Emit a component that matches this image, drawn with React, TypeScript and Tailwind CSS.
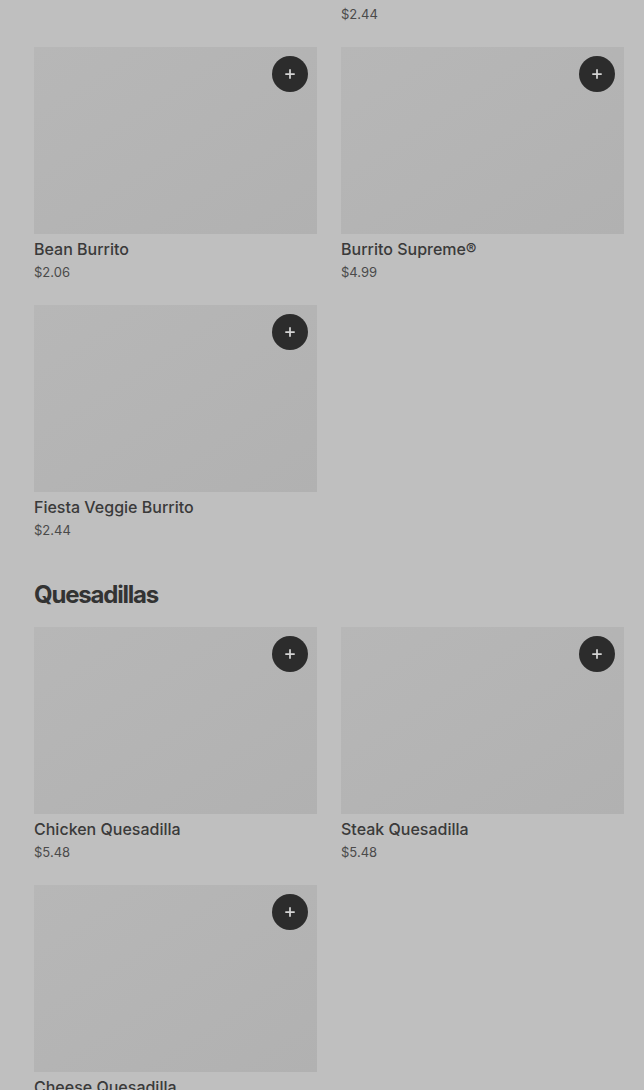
import { Plus } from "lucide-react";

type Item = { name: string; price: string };

const burritos: Item[] = [
  { name: "Black Bean Chalupa Burrito", price: "$2.44" },
  { name: "Beefy 5-Layer Burrito with Creamy Jalapeño Sauce", price: "$2.44" },
  { name: "Bean Burrito", price: "$2.06" },
  { name: "Burrito Supreme®", price: "$4.99" },
  { name: "Fiesta Veggie Burrito", price: "$2.44" },
];

const quesadillas: Item[] = [
  { name: "Chicken Quesadilla", price: "$5.48" },
  { name: "Steak Quesadilla", price: "$5.48" },
  { name: "Cheese Quesadilla", price: "$4.49" },
];

function MenuCard({ item }: { item: Item }) {
  return (
    <div className="flex flex-col">
      <div className="relative h-[187px] bg-gradient-to-br from-[#b7b7b7] to-[#b1b1b1]">
        <button className="absolute top-[9px] right-[9px] w-9 h-9 rounded-full bg-[#2c2c2c] flex items-center justify-center">
          <Plus className="w-[14px] h-[14px] text-[#d4d4d4]" strokeWidth={3} />
        </button>
      </div>
      <div className="mt-[3px] text-base leading-6 font-medium text-[#3a3a3a]">{item.name}</div>
      <div className="mt-px h-[19px] text-[13px] leading-5 text-[#4a4a4a]">{item.price}</div>
    </div>
  );
}

function Grid({ items }: { items: Item[] }) {
  return (
    <div className="grid grid-cols-2 gap-x-6 gap-y-6">
      {items.map((it) => (
        <MenuCard key={it.name} item={it} />
      ))}
    </div>
  );
}

export default function App() {
  return (
    <div
      className="w-[644px] h-[1090px] overflow-hidden bg-[#bfbfbf]"
      style={{ fontFamily: "Inter, 'Liberation Sans', sans-serif" }}
    >
      {/* page is scrolled: first row sits above the viewport */}
      <div className="-mt-[235px] pl-[34px] pr-[20px]">
        <Grid items={burritos} />
        <h2 className="mt-10 mb-4 text-2xl leading-8 font-bold tracking-[-0.05em] text-[#333333]">
          Quesadillas
        </h2>
        <Grid items={quesadillas} />
      </div>
    </div>
  );
}
